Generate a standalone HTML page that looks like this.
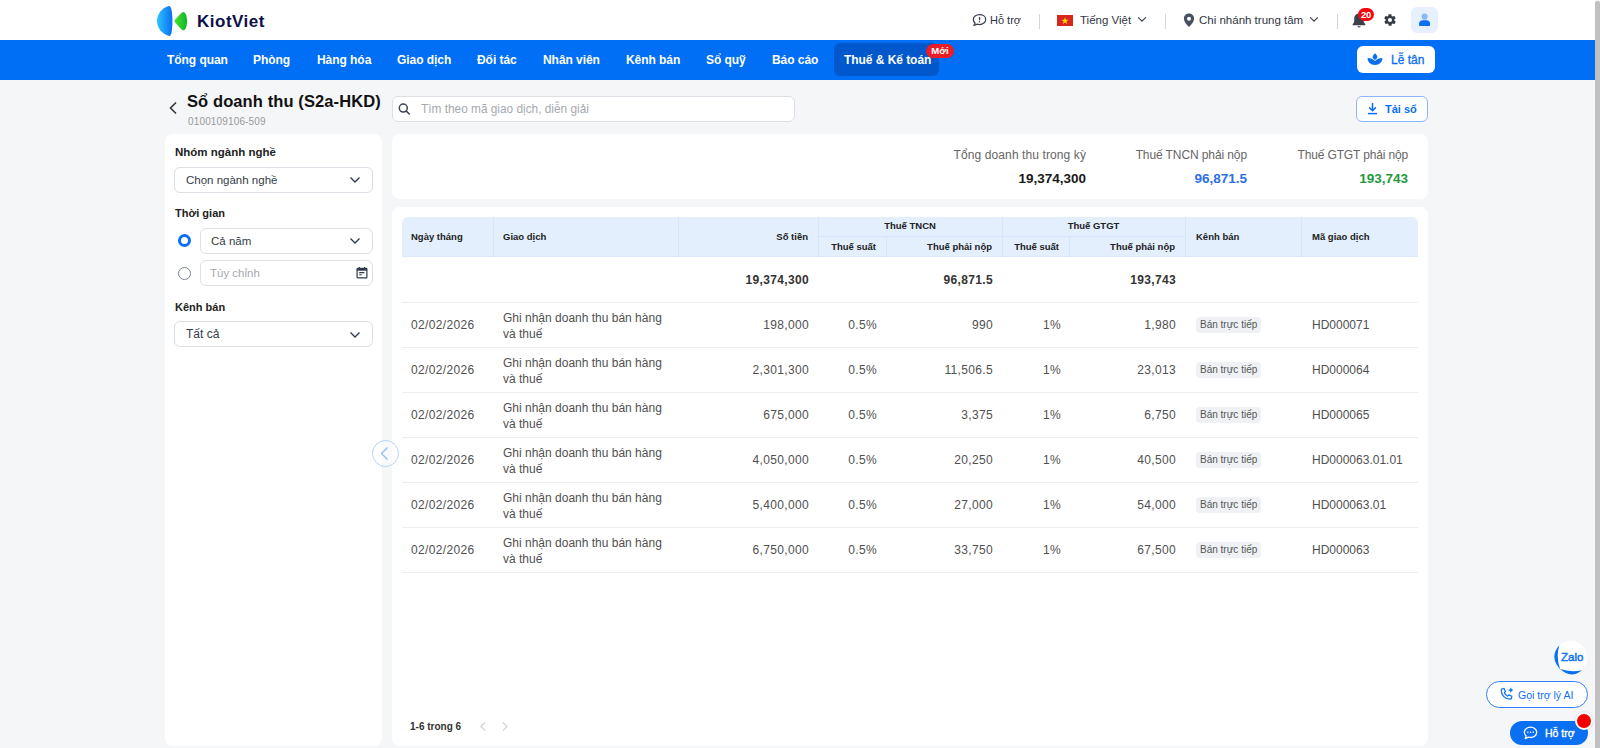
<!DOCTYPE html>
<html lang="vi">
<head>
<meta charset="utf-8">
<title>Sổ doanh thu</title>
<style>
*{box-sizing:border-box;margin:0;padding:0}
html,body{width:1600px;height:748px;overflow:hidden}
body{position:relative;background:#f5f6f8;font-family:"Liberation Sans",sans-serif;color:#222}
.a{position:absolute;white-space:nowrap}
#top{left:0;top:0;width:1595px;height:40px;background:#fff}
#nav{left:0;top:40px;width:1595px;height:40px;background:#006ef5}
.ni{top:52.5px;font-size:12px;font-weight:700;color:#fff;line-height:14px;letter-spacing:-0.05px}
#active{left:834px;top:43px;width:105px;height:33px;background:#0058cc;border-radius:6px}
#moi{left:926px;top:44px;width:28px;height:14px;background:#ea1c24;border-radius:7px;color:#fff;font-size:9.5px;font-weight:700;line-height:14px;text-align:center}
.ht{font-size:11px;color:#2f3541;line-height:14px}
.vd{width:1px;height:15px;background:#d4d6da}
#letan{left:1357px;top:46px;width:78px;height:27px;background:#fff;border-radius:6px}
.card{background:#fff;border-radius:8px}
.sel{background:#fff;border:1px solid #dcdfe4;border-radius:6px;height:26px}
.lbl{font-size:11px;font-weight:700;color:#222;line-height:14px}
.st{font-size:11.5px;color:#353c48;line-height:14px}
.th{font-size:9.5px;font-weight:700;color:#222;line-height:12px}
.td{font-size:12px;color:#505050;line-height:15px}
.n{letter-spacing:0.35px}
.tb{font-size:12px;font-weight:700;color:#333;line-height:15px}
.r{text-align:right}
.hl{height:1px;background:#eceef1;left:402px;width:1016px}
.vl{width:1px;background:#d5e5fb}
.tag{height:16px;background:#eff1f4;border-radius:4px;font-size:10px;color:#555;line-height:16px;padding:0 4px}
</style>
</head>
<body>
<!-- top header -->
<div class="a" id="top"></div>
<!-- logo -->
<svg class="a" style="left:155px;top:4px" width="36" height="34" viewBox="0 0 36 34">
  <defs>
    <linearGradient id="gb" x1="0" x2="1" y1="0" y2="0"><stop offset="0" stop-color="#2ec3ff"/><stop offset="1" stop-color="#0a6ff0"/></linearGradient>
    <linearGradient id="gg" x1="0" x2="1" y1="0" y2="0"><stop offset="0" stop-color="#49e22b"/><stop offset="1" stop-color="#12b52a"/></linearGradient>
  </defs>
  <path d="M13.7 2 C6.5 4 2 10.5 2 17 C2 24 7 30 14 32 C16.3 32.6 17.4 27 17.4 17 C17.4 8 16.3 1.4 13.7 2Z" fill="url(#gb)"/>
  <path d="M19.4 17.3 C19 16.3 26 9 27.6 8.2 C29.8 7.2 32.1 11 32.1 17.2 C32.1 23.4 29.8 27.2 27.6 26.2 C26 25.4 19.8 18.4 19.4 17.3Z" fill="url(#gg)"/>
</svg>
<div class="a" style="left:197px;top:12px;font-size:17px;font-weight:700;color:#0b1148;line-height:20px;letter-spacing:0.5px">KiotViet</div>

<!-- right header items -->
<svg class="a" style="left:972px;top:13px" width="15" height="14" viewBox="0 0 15 14"><path d="M7.5 1.6C4 1.6 1.3 3.7 1.3 6.4c0 1.4.7 2.600 1.800 3.500L1.900 12.500l3.500-1.300c.7.200 1.400.300 2.100.300 3.500 0 6.200-2.200 6.200-5.100S11 1.600 7.500 1.600z" fill="none" stroke="#3a4250" stroke-width="1.25" stroke-linejoin="round"/><rect x="6.9" y="3.9" width="1.3" height="3.4" rx=".6" fill="#3a4250"/><circle cx="7.55" cy="8.8" r=".75" fill="#3a4250"/></svg>
<div class="a ht" style="left:990px;top:13px">Hỗ trợ</div>
<div class="a vd" style="left:1039px;top:14px"></div>
<svg class="a" style="left:1057px;top:15px" width="16" height="11" viewBox="0 0 16 11"><rect width="16" height="11" fill="#da251d"/><path d="M8 2.2l.85 2.6h2.7l-2.2 1.6.85 2.6L8 7.4 5.8 9l.85-2.6-2.2-1.6h2.7z" fill="#ffde00"/></svg>
<div class="a ht" style="left:1080px;top:13px;font-size:11.5px">Tiếng Việt</div>
<svg class="a" style="left:1137px;top:16px" width="10" height="7" viewBox="0 0 10 7"><path d="M1.2 1.3L5 5.1l3.8-3.8" fill="none" stroke="#3d4553" stroke-width="1.2"/></svg>
<div class="a vd" style="left:1165px;top:14px"></div>
<svg class="a" style="left:1183px;top:13px" width="12" height="14" viewBox="0 0 12 14"><path d="M6 .6C3.1.6.9 2.8.9 5.6c0 3.4 4.2 7.6 4.6 8 .3.3.7.3 1 0 .4-.4 4.6-4.6 4.6-8C11.1 2.8 8.9.6 6 .6zm0 7.1a2 2 0 110-4 2 2 0 010 4z" fill="#465060"/></svg>
<div class="a ht" style="left:1199px;top:13px;font-size:11.5px">Chi nhánh trung tâm</div>
<svg class="a" style="left:1309px;top:16px" width="10" height="7" viewBox="0 0 10 7"><path d="M1.2 1.3L5 5.1l3.8-3.8" fill="none" stroke="#3d4553" stroke-width="1.2"/></svg>
<div class="a vd" style="left:1337px;top:14px"></div>
<svg class="a" style="left:1351px;top:12px" width="16" height="17" viewBox="0 0 16 17"><path d="M8 1.5c-2.8 0-4.8 2.2-4.8 5v3.4L1.6 12.4v.9h12.8v-.9l-1.6-2.5V6.5c0-2.8-2-5-4.8-5z" fill="#3a414b"/><path d="M6.3 14.3a1.8 1.8 0 003.4 0z" fill="#3a414b"/></svg>
<div class="a" style="left:1358px;top:7.5px;width:16px;height:13.5px;background:#f2080f;border-radius:7px;color:#fff;font-size:9.5px;font-weight:700;line-height:13.5px;text-align:center;letter-spacing:-0.2px">20</div>
<svg class="a" style="left:1383px;top:13px" width="14" height="14" viewBox="0 0 24 24"><path fill="#363d47" d="M19.4 13a7.8 7.8 0 000-2l2.1-1.6c.2-.2.2-.4.1-.6l-2-3.5c-.1-.2-.4-.3-.6-.2l-2.5 1a7.3 7.3 0 00-1.7-1l-.4-2.6c0-.3-.2-.5-.5-.5h-4c-.3 0-.5.2-.5.4l-.4 2.7c-.6.3-1.2.6-1.7 1l-2.5-1c-.2-.1-.5 0-.6.2l-2 3.5c-.1.2-.1.4.1.6L4.6 11a7.8 7.8 0 000 2l-2.1 1.6c-.2.2-.2.4-.1.6l2 3.5c.1.2.4.3.6.2l2.5-1c.5.4 1.1.7 1.7 1l.4 2.6c0 .3.2.5.5.5h4c.3 0 .5-.2.5-.4l.4-2.7c.6-.3 1.2-.6 1.7-1l2.5 1c.2.1.5 0 .6-.2l2-3.5c.1-.2.1-.4-.1-.6zM12 15.5a3.5 3.5 0 110-7 3.5 3.5 0 010 7z"/></svg>
<div class="a" style="left:1411px;top:7px;width:27px;height:26px;background:#e6f0fe;border-radius:6px"></div>
<svg class="a" style="left:1417px;top:12px" width="15" height="15" viewBox="0 0 15 15"><circle cx="7.6" cy="4.6" r="3.1" fill="#8ab8fb"/><path d="M2.1 13.2v-1.6c0-2 1.600-3.300 3.600-3.300h3.800c2 0 3.600 1.300 3.600 3.300v1.600c0 .5-.3.800-.8.800H2.900c-.5 0-.8-.3-.8-.8z" fill="#0a6ff0"/></svg>

<!-- nav -->
<div class="a" id="nav"></div>
<div class="a" id="active"></div>
<div class="a ni" style="left:167px">Tổng quan</div>
<div class="a ni" style="left:253px">Phòng</div>
<div class="a ni" style="left:317px">Hàng hóa</div>
<div class="a ni" style="left:397px">Giao dịch</div>
<div class="a ni" style="left:477px">Đối tác</div>
<div class="a ni" style="left:543px">Nhân viên</div>
<div class="a ni" style="left:626px">Kênh bán</div>
<div class="a ni" style="left:706px">Sổ quỹ</div>
<div class="a ni" style="left:772px">Báo cáo</div>
<div class="a ni" style="left:844px">Thuế &amp; Kế toán</div>
<div class="a" id="moi">Mới</div>
<div class="a" id="letan"></div>
<svg class="a" style="left:1367px;top:52px" width="16" height="14" viewBox="0 0 16 14"><path d="M8 1.3C9.3 2.6 10.4 3.9 10.4 5C10.4 6 9.3 7 8 8C6.7 7 5.6 6 5.6 5C5.6 3.9 6.7 2.6 8 1.3Z" fill="#0a6ff0"/><path d="M0.6 6C3.6 6 6.4 7.3 8 9C9.6 7.3 12.4 6 15.4 6C15.4 10.2 12.4 12.9 8 12.9C3.6 12.9 0.6 10.2 0.6 6Z" fill="#0a6ff0"/></svg>
<div class="a" style="left:1391px;top:53px;font-size:12px;color:#0a6ff0;line-height:14px;-webkit-text-stroke:0.3px #0a6ff0">Lễ tân</div>

<!-- page title -->
<svg class="a" style="left:168px;top:101px" width="10" height="14" viewBox="0 0 10 14"><path d="M8 1.5L2.5 7 8 12.5" fill="none" stroke="#333" stroke-width="1.6"/></svg>
<div class="a" style="left:187px;top:92px;font-size:16.5px;font-weight:700;color:#111;line-height:19px;letter-spacing:0.1px">Sổ doanh thu (S2a-HKD)</div>
<div class="a" style="left:188px;top:116px;font-size:10px;color:#999;line-height:12px;letter-spacing:0.15px">0100109106-509</div>

<!-- search -->
<div class="a" style="left:392px;top:96px;width:403px;height:26px;background:#fff;border:1px solid #dcdfe4;border-radius:6px"></div>
<svg class="a" style="left:398px;top:103px" width="13" height="12" viewBox="0 0 13 12"><circle cx="5.3" cy="5.1" r="4" fill="none" stroke="#3d4450" stroke-width="1.5"/><path d="M8.2 8l3 3" stroke="#3d4450" stroke-width="1.6" stroke-linecap="round"/></svg>
<div class="a" style="left:421px;top:102px;font-size:11.85px;color:#a5a9b0;line-height:14px">Tìm theo mã giao dịch, diễn giải</div>

<!-- Tai so -->
<div class="a" style="left:1356px;top:96px;width:72px;height:26px;border:1.5px solid #8ab8fb;border-radius:6px;background:#fff"></div>
<svg class="a" style="left:1367px;top:102px" width="11" height="13" viewBox="0 0 11 13"><path d="M5.5 1v7.5M2.2 5.4l3.3 3.3 3.3-3.3" fill="none" stroke="#0a6ff0" stroke-width="1.5"/><path d="M1 11.6h9" stroke="#0a6ff0" stroke-width="1.5"/></svg>
<div class="a" style="left:1385px;top:102px;font-size:11px;font-weight:700;color:#0a6ff0;line-height:14px">Tải sổ</div>

<!-- sidebar -->
<div class="a card" style="left:165px;top:134px;width:217px;height:612px"></div>
<div class="a lbl" style="left:175px;top:145px;font-size:11.5px">Nhóm ngành nghề</div>
<div class="a sel" style="left:174px;top:167px;width:199px"></div>
<div class="a st" style="left:186px;top:173px">Chọn ngành nghề</div>
<svg class="a" style="left:349px;top:175.5px" width="12" height="8" viewBox="0 0 12 8"><path d="M1.5 1.5L6 6l4.5-4.5" fill="none" stroke="#2f3a48" stroke-width="1.3"/></svg>

<div class="a lbl" style="left:175px;top:206px">Thời gian</div>
<div class="a" style="left:177.5px;top:234px;width:13px;height:13px;border:3px solid #0a6ff0;border-radius:50%;background:#fff"></div>
<div class="a sel" style="left:200px;top:228px;width:173px"></div>
<div class="a st" style="left:211px;top:234px">Cả năm</div>
<svg class="a" style="left:349px;top:236.5px" width="12" height="8" viewBox="0 0 12 8"><path d="M1.5 1.5L6 6l4.5-4.5" fill="none" stroke="#2f3a48" stroke-width="1.3"/></svg>
<div class="a" style="left:177.5px;top:266.5px;width:13px;height:13px;border:1px solid #7d8692;border-radius:50%;background:#fff"></div>
<div class="a sel" style="left:200px;top:260px;width:173px"></div>
<div class="a st" style="left:210px;top:266px;color:#a5a9b0">Tùy chỉnh</div>
<svg class="a" style="left:356px;top:266px" width="12" height="13" viewBox="0 0 12 13"><rect x="1.1" y="2.3" width="9.8" height="9.6" rx=".7" fill="none" stroke="#2f3a48" stroke-width="1.2"/><rect x="1.1" y="2.3" width="9.8" height="2.4" fill="#2f3a48"/><path d="M3.4 1v2M8.6 1v2" stroke="#2f3a48" stroke-width="1.1"/><path d="M3.2 6.6h5.2M3.2 8.8h2.6" stroke="#2f3a48" stroke-width="1.1"/></svg>

<div class="a lbl" style="left:175px;top:300px">Kênh bán</div>
<div class="a sel" style="left:174px;top:321px;width:199px"></div>
<div class="a st" style="left:186px;top:327px;font-size:12px">Tất cả</div>
<svg class="a" style="left:349px;top:330.5px" width="12" height="8" viewBox="0 0 12 8"><path d="M1.5 1.5L6 6l4.5-4.5" fill="none" stroke="#2f3a48" stroke-width="1.3"/></svg>

<!-- summary card -->
<div class="a card" style="left:392px;top:134px;width:1036px;height:65px"></div>
<div class="a r" style="right:514px;top:148px;font-size:12px;color:#666;line-height:14px;letter-spacing:0.1px">Tổng doanh thu trong kỳ</div>
<div class="a r" style="right:514px;top:171px;font-size:13.5px;font-weight:700;color:#1a1a1a;line-height:15px">19,374,300</div>
<div class="a r" style="right:353px;top:148px;font-size:12px;color:#666;line-height:14px;letter-spacing:-0.1px">Thuế TNCN phải nộp</div>
<div class="a r" style="right:353px;top:171px;font-size:13.5px;font-weight:700;color:#2b6fe6;line-height:15px">96,871.5</div>
<div class="a r" style="right:192px;top:148px;font-size:12px;color:#666;line-height:14px;letter-spacing:-0.15px">Thuế GTGT phải nộp</div>
<div class="a r" style="right:192px;top:171px;font-size:13.5px;font-weight:700;color:#1f9a3c;line-height:15px">193,743</div>

<!-- table card -->
<div class="a card" style="left:392px;top:207px;width:1036px;height:539px"></div>
<div class="a" style="left:402px;top:217px;width:1016px;height:40px;background:#e3effd;border-radius:6px 6px 0 0"></div>
<div class="a" style="left:402px;top:256px;width:1016px;height:1px;background:#dbe8fb"></div>
<div class="a vl" style="left:493px;top:217px;height:40px"></div>
<div class="a vl" style="left:678px;top:217px;height:40px"></div>
<div class="a vl" style="left:818px;top:217px;height:40px"></div>
<div class="a vl" style="left:1002px;top:217px;height:40px"></div>
<div class="a vl" style="left:1185px;top:217px;height:40px"></div>
<div class="a vl" style="left:1301px;top:217px;height:40px"></div>
<div class="a vl" style="left:886px;top:236px;height:21px"></div>
<div class="a vl" style="left:1069px;top:236px;height:21px"></div>
<div class="a" style="left:818px;top:236px;width:367px;height:1px;background:#d3e4fb"></div>

<div class="a th" style="left:411px;top:231px">Ngày tháng</div>
<div class="a th" style="left:503px;top:231px">Giao dịch</div>
<div class="a th r" style="right:792px;top:231px">Số tiền</div>
<div class="a th" style="left:818px;width:184px;text-align:center;top:220px">Thuế TNCN</div>
<div class="a th r" style="right:724px;top:241px">Thuế suất</div>
<div class="a th r" style="right:608px;top:241px">Thuế phải nộp</div>
<div class="a th" style="left:1002px;width:183px;text-align:center;top:220px">Thuế GTGT</div>
<div class="a th r" style="right:541px;top:241px">Thuế suất</div>
<div class="a th r" style="right:425px;top:241px">Thuế phải nộp</div>
<div class="a th" style="left:1196px;top:231px">Kênh bán</div>
<div class="a th" style="left:1312px;top:231px">Mã giao dịch</div>

<!-- total row -->
<div class="a tb r n" style="right:791px;top:273px">19,374,300</div>
<div class="a tb r n" style="right:607px;top:273px">96,871.5</div>
<div class="a tb r n" style="right:424px;top:273px">193,743</div>
<div class="a hl" style="top:302px"></div>

<!--ROWS-->
<div class="a td n" style="left:411px;top:318px">02/02/2026</div>
<div class="a td" style="left:503px;top:309.5px;line-height:16px">Ghi nhận doanh thu bán hàng<br>và thuế</div>
<div class="a td r n" style="right:791px;top:318px">198,000</div>
<div class="a td r n" style="right:723px;top:318px">0.5%</div>
<div class="a td r n" style="right:607px;top:318px">990</div>
<div class="a td r n" style="right:539px;top:318px">1%</div>
<div class="a td r n" style="right:424px;top:318px">1,980</div>
<div class="a tag" style="left:1196px;top:317px">Bán trực tiếp</div>
<div class="a td" style="left:1312px;top:318px">HD000071</div>
<div class="a hl" style="top:347px"></div>
<div class="a td n" style="left:411px;top:363px">02/02/2026</div>
<div class="a td" style="left:503px;top:354.5px;line-height:16px">Ghi nhận doanh thu bán hàng<br>và thuế</div>
<div class="a td r n" style="right:791px;top:363px">2,301,300</div>
<div class="a td r n" style="right:723px;top:363px">0.5%</div>
<div class="a td r n" style="right:607px;top:363px">11,506.5</div>
<div class="a td r n" style="right:539px;top:363px">1%</div>
<div class="a td r n" style="right:424px;top:363px">23,013</div>
<div class="a tag" style="left:1196px;top:362px">Bán trực tiếp</div>
<div class="a td" style="left:1312px;top:363px">HD000064</div>
<div class="a hl" style="top:392px"></div>
<div class="a td n" style="left:411px;top:408px">02/02/2026</div>
<div class="a td" style="left:503px;top:399.5px;line-height:16px">Ghi nhận doanh thu bán hàng<br>và thuế</div>
<div class="a td r n" style="right:791px;top:408px">675,000</div>
<div class="a td r n" style="right:723px;top:408px">0.5%</div>
<div class="a td r n" style="right:607px;top:408px">3,375</div>
<div class="a td r n" style="right:539px;top:408px">1%</div>
<div class="a td r n" style="right:424px;top:408px">6,750</div>
<div class="a tag" style="left:1196px;top:407px">Bán trực tiếp</div>
<div class="a td" style="left:1312px;top:408px">HD000065</div>
<div class="a hl" style="top:437px"></div>
<div class="a td n" style="left:411px;top:453px">02/02/2026</div>
<div class="a td" style="left:503px;top:444.5px;line-height:16px">Ghi nhận doanh thu bán hàng<br>và thuế</div>
<div class="a td r n" style="right:791px;top:453px">4,050,000</div>
<div class="a td r n" style="right:723px;top:453px">0.5%</div>
<div class="a td r n" style="right:607px;top:453px">20,250</div>
<div class="a td r n" style="right:539px;top:453px">1%</div>
<div class="a td r n" style="right:424px;top:453px">40,500</div>
<div class="a tag" style="left:1196px;top:452px">Bán trực tiếp</div>
<div class="a td" style="left:1312px;top:453px">HD000063.01.01</div>
<div class="a hl" style="top:482px"></div>
<div class="a td n" style="left:411px;top:498px">02/02/2026</div>
<div class="a td" style="left:503px;top:489.5px;line-height:16px">Ghi nhận doanh thu bán hàng<br>và thuế</div>
<div class="a td r n" style="right:791px;top:498px">5,400,000</div>
<div class="a td r n" style="right:723px;top:498px">0.5%</div>
<div class="a td r n" style="right:607px;top:498px">27,000</div>
<div class="a td r n" style="right:539px;top:498px">1%</div>
<div class="a td r n" style="right:424px;top:498px">54,000</div>
<div class="a tag" style="left:1196px;top:497px">Bán trực tiếp</div>
<div class="a td" style="left:1312px;top:498px">HD000063.01</div>
<div class="a hl" style="top:527px"></div>
<div class="a td n" style="left:411px;top:543px">02/02/2026</div>
<div class="a td" style="left:503px;top:534.5px;line-height:16px">Ghi nhận doanh thu bán hàng<br>và thuế</div>
<div class="a td r n" style="right:791px;top:543px">6,750,000</div>
<div class="a td r n" style="right:723px;top:543px">0.5%</div>
<div class="a td r n" style="right:607px;top:543px">33,750</div>
<div class="a td r n" style="right:539px;top:543px">1%</div>
<div class="a td r n" style="right:424px;top:543px">67,500</div>
<div class="a tag" style="left:1196px;top:542px">Bán trực tiếp</div>
<div class="a td" style="left:1312px;top:543px">HD000063</div>
<div class="a hl" style="top:572px"></div>
<!--/ROWS-->




<!-- pagination -->
<div class="a" style="left:410px;top:720px;font-size:10px;font-weight:700;color:#333;line-height:13px">1-6 trong 6</div>
<svg class="a" style="left:479px;top:721px" width="8" height="11" viewBox="0 0 8 11"><path d="M6 1.5L2 5.5l4 4" fill="none" stroke="#d0d3d8" stroke-width="1.2"/></svg>
<svg class="a" style="left:501px;top:721px" width="8" height="11" viewBox="0 0 8 11"><path d="M2 1.5l4 4-4 4" fill="none" stroke="#d0d3d8" stroke-width="1.2"/></svg>

<!-- collapse button -->
<div class="a" style="left:372px;top:440px;width:27px;height:27px;border:1.5px solid #b3d3fb;border-radius:50%;background:rgba(255,255,255,.35)"></div>
<svg class="a" style="left:379px;top:446px" width="11" height="15" viewBox="0 0 11 15"><path d="M8.5 1.5L2.5 7.5l6 6" fill="none" stroke="#8fbdfa" stroke-width="1.3"/></svg>

<!-- floating widgets -->
<div class="a" style="left:1554px;top:641px;width:33px;height:33px;border-radius:50%;background:#fff"></div>
<svg class="a" style="left:1552px;top:640px" width="38" height="37" viewBox="0 0 38 37"><path d="M7.4 5.3 Q-3.2 17 8.3 29.4 Q3.6 17 7.4 5.3Z" fill="#0a6ff0"/><path d="M8.2 29 Q18.5 39.2 30.2 30.2 Q18.5 32.6 8.2 29Z" fill="#0a6ff0"/></svg>
<div class="a" style="left:1561px;top:651px;font-size:11.5px;color:#0a6ff0;line-height:13px;letter-spacing:0px;-webkit-text-stroke:0.45px #0a6ff0">Zalo</div>
<div class="a" style="left:1486px;top:681px;width:102px;height:27px;border:1px solid #2f80f5;border-radius:14px;background:#fff"></div>
<svg class="a" style="left:1499px;top:687px" width="15" height="15" viewBox="0 0 15 15"><path d="M3.2 1.8l1.9-.3 1.4 3-1.3 1.1c.7 1.6 1.9 2.9 3.5 3.6l1.1-1.3 3 1.4-.3 1.9c-.1.6-.6 1-1.2 1C6.100 12.200 2.200 8.300 2.200 3c0-.6.4-1.100 1-1.200z" fill="none" stroke="#0a6ff0" stroke-width="1.2" stroke-linejoin="round"/><path d="M11.8 .3l.8 2 2 .8-2 .8-.8 2-.8-2-2-.8 2-.8z" fill="#0a6ff0"/></svg>
<div class="a" style="left:1518px;top:689px;font-size:10.5px;color:#0a6ff0;line-height:13px">Gọi trợ lý AI</div>
<div class="a" style="left:1510px;top:721px;width:78px;height:24px;border-radius:12px;background:#0a6ff0"></div>
<svg class="a" style="left:1523px;top:726px" width="15" height="14" viewBox="0 0 15 14"><path d="M7.5 1.2C4 1.2 1.3 3.5 1.3 6.3c0 1.400.7 2.700 1.800 3.600L2.200 12.600l3.200-1.400c.7.200 1.400.300 2.100.300 3.500 0 6.200-2.300 6.200-5.200S11 1.200 7.500 1.200z" fill="none" stroke="#fff" stroke-width="1.3" stroke-linejoin="round"/><circle cx="4.8" cy="6.3" r=".8" fill="#fff"/><circle cx="7.5" cy="6.3" r=".8" fill="#fff"/><circle cx="10.2" cy="6.3" r=".8" fill="#fff"/></svg>
<div class="a" style="left:1545px;top:727px;font-size:10.5px;color:#fff;line-height:13px;-webkit-text-stroke:0.35px #fff">Hỗ trợ</div>
<div class="a" style="left:1575px;top:712px;width:18px;height:18px;border-radius:50%;background:#f50000;border:2px solid #fff;box-shadow:0 0 2px rgba(0,0,0,.2)"></div>

<!-- scrollbar -->
<div class="a" style="left:1595px;top:0;width:5px;height:748px;background:#f5f6f8"></div>
<div class="a" style="left:1595px;top:1px;width:5px;height:747px;background:#c1c1c1;border-radius:2px 2px 0 0"></div>
</body>
</html>
